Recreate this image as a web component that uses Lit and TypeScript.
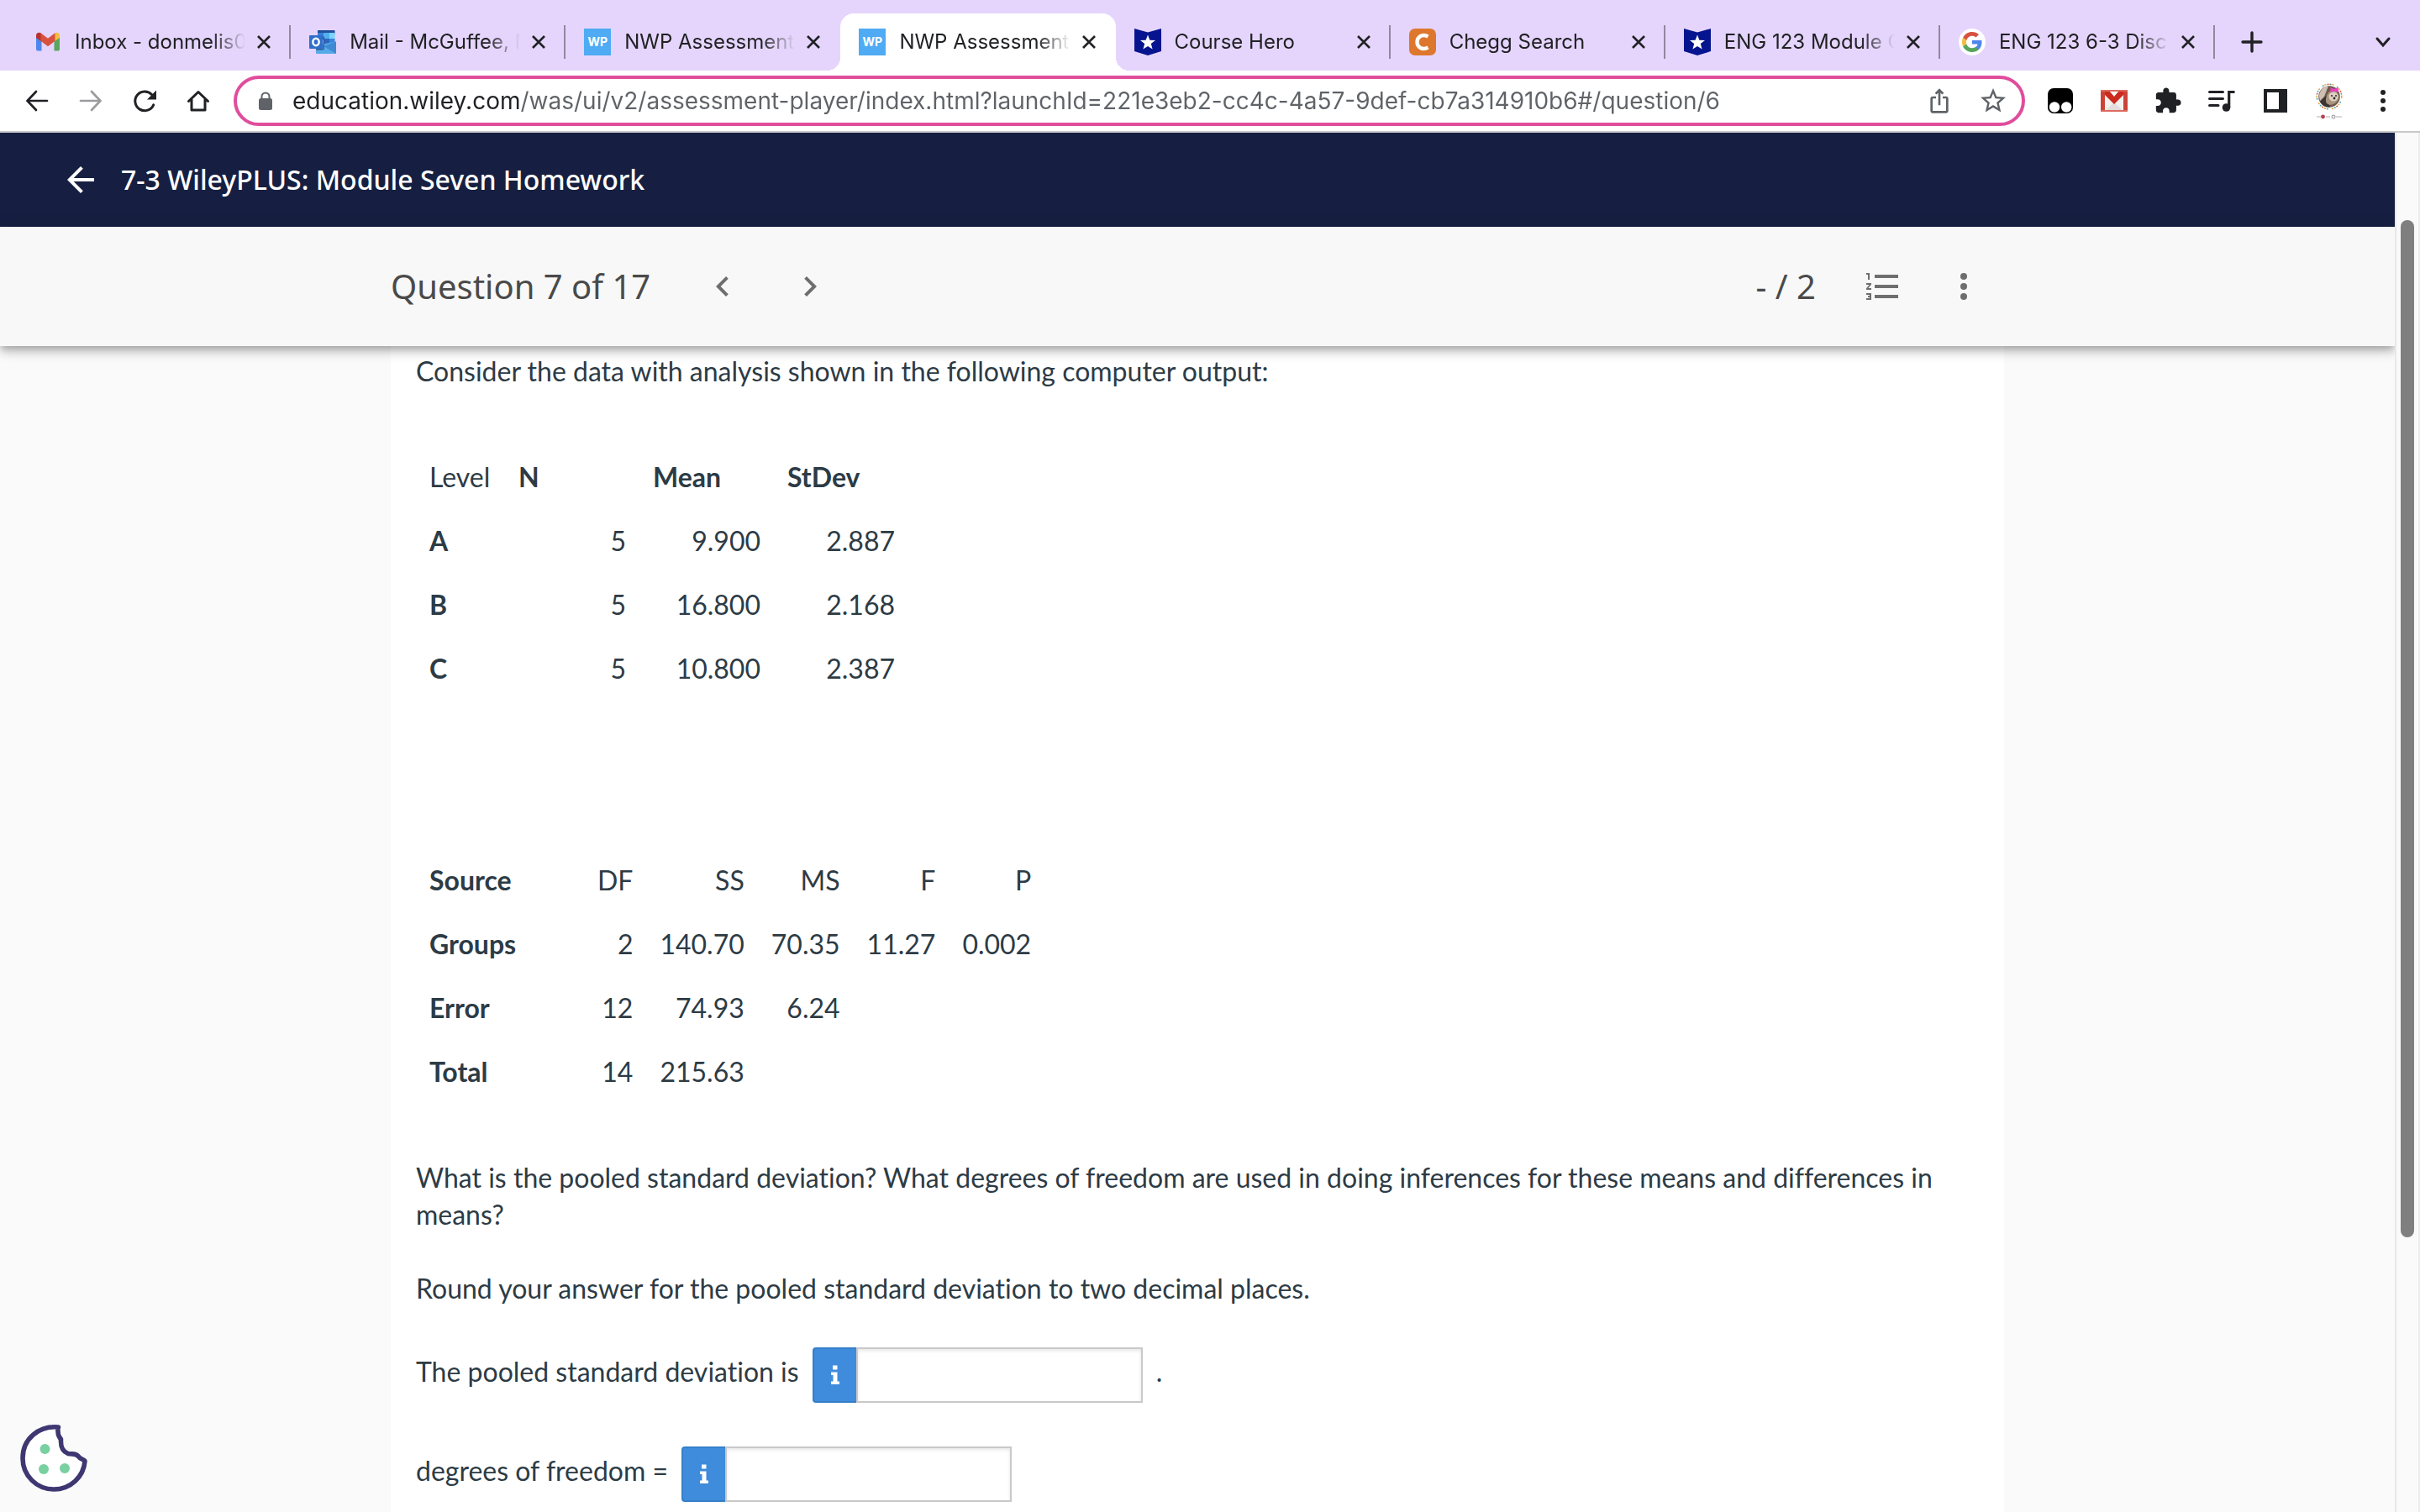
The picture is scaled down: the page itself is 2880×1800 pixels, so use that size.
import { LitElement, html, svg, css, nothing } from "lit";
import { customElement, property, state } from "lit/decorators.js";
import { classMap } from "lit/directives/class-map.js";

const icons = {
  gmail: svg`<svg viewBox="0 0 32 32" width="32" height="32">
    <path fill="#4f86ec" d="M2 10v14.500c0 1.300 .9 2.100 2.100 2.100H8.500V14z"/>
    <path fill="#58a55c" d="M23.500 14v12.600h4.400c1.200 0 2.100-.8 2.100-2.100V10z"/>
    <path fill="#b5332c" d="M2 11V8c0-3 3.300-4.300 5.600-2.600L8.500 6v9.500L2 11z"/>
    <path fill="#f2be42" d="M30 11V8c0-3-3.300-4.300-5.600-2.600L23.500 6v9.500L30 11z"/>
    <path fill="#d8513f" d="M7.500 5.300 16 11.700l8.500-6.400v9.400L16 21.300l-8.500-6.600z"/></svg>`,
  outlook: svg`<svg viewBox="0 0 32 32" width="32" height="32">
    <path fill="#1f4f9d" d="M11 2h18.500c.6 0 1 .4 1 1v4H10V3c0-.6.400-1 1-1z"/>
    <path fill="#3a7dd4" d="M10 5h7v8h-7z"/><path fill="#53aef0" d="M17 5h7v7h-7z"/><path fill="#7bd4fa" d="M24 5h6.500v7H24z"/>
    <path fill="#2f66bd" d="M17 12h7v8h-7z"/><path fill="#3a86dc" d="M24 12h6.500v6H24z"/>
    <path fill="#56aae8" d="M8 20l24-4.500V29a1 1 0 0 1-1 1H9a1 1 0 0 1-1-1z"/>
    <path fill="#3b82d0" d="M17 21 32 30V15.500z" opacity=".8"/>
    <path fill="#1b3f7c" d="M8 24h8.500V9l1.500 1v14l-1 1.500H8z" opacity=".7"/>
    <rect x="0" y="8" width="16" height="16" rx="1" fill="#2f6fca"/>
    <ellipse cx="8" cy="16" rx="3.700" ry="4.200" fill="none" stroke="#fff" stroke-width="2.400"/></svg>`,
  shield: svg`<svg viewBox="0 0 32 32" width="32" height="32">
    <path fill="#06148f" d="M0 0l16 4.500L32 0v27L16 32 0 27z"/>
    <path fill="#fff" d="M16 7.500l2.400 6.200 6.600.3-5.200 4.100 1.800 6.400-5.600-3.600-5.600 3.600 1.800-6.400L7 14l6.600-.3z"/></svg>`,
  chegg: svg`<svg viewBox="0 0 32 32" width="32" height="32">
    <rect width="32" height="32" rx="7" fill="#dd772e"/>
    <path d="M22.500 9.500C15 5.500 9.500 10.500 9.500 16s5.500 10.500 13 6.500" fill="none" stroke="#fff" stroke-width="4.400"/></svg>`,
  google: svg`<svg viewBox="0 0 32 32" width="32" height="32">
    <circle cx="16" cy="16" r="16" fill="#fff"/>
    <g transform="translate(4 4)">
    <path fill="#4f86ec" d="M23.500 12.300c0-.9-.1-1.600-.2-2.400H12v4.500h6.500c-.3 1.700-1.200 2.900-2.500 3.700v3h4c2.300-2.100 3.500-5.200 3.500-8.800z"/>
    <path fill="#58a55c" d="M12 24c3.200 0 6-1.100 8-2.900l-4-3c-1.100.7-2.400 1.200-4 1.200-3.100 0-5.800-2.100-6.700-4.900H1.200v3.100C3.200 21.400 7.300 24 12 24z"/>
    <path fill="#f2be42" d="M5.300 14.400c-.5-1.500-.5-3.200 0-4.700V6.600H1.200c-1.700 3.400-1.700 7.400 0 10.900z"/>
    <path fill="#d8513f" d="M12 4.700c1.700 0 3.300.6 4.500 1.800L20 3C17.800 1.100 15.100 0 12 0 7.300 0 3.200 2.700 1.200 6.600l4.100 3.100C6.200 6.800 8.900 4.700 12 4.700z"/></g></svg>`,
  close: svg`<svg viewBox="0 0 16 16" width="16" height="16"><path d="M1 1l14 14M15 1L1 15" stroke="#202124" stroke-width="2.600"/></svg>`,
  plus: svg`<svg viewBox="0 0 32 32" width="32" height="32"><path d="M16 5v22M5 16h22" stroke="#202124" stroke-width="3.400" stroke-linecap="round"/></svg>`,
  down: svg`<svg viewBox="0 0 32 32" width="32" height="32"><path d="M9 12l7 8 7-8" fill="none" stroke="#202124" stroke-width="3" stroke-linecap="round"/></svg>`,
  back: svg`<svg viewBox="0 0 32 32" width="32" height="32"><path d="M28 16H4.500M15 5L4.500 16 15 27" fill="none" stroke="#202124" stroke-width="2.700" stroke-linecap="round"/></svg>`,
  forward: svg`<svg viewBox="0 0 32 32" width="32" height="32"><path d="M4 16h23.500M17 5l10.500 11L17 27" fill="none" stroke="#9b9c9e" stroke-width="2.700" stroke-linecap="round"/></svg>`,
  reload: svg`<svg viewBox="0 0 32 32" width="32" height="32"><path d="M24.500 8.500A11.400 11.400 0 1 0 26.700 20.800" fill="none" stroke="#202124" stroke-width="3" stroke-linecap="round"/><path d="M30 3.500V14.500H19z" fill="#202124"/></svg>`,
  home: svg`<svg viewBox="0 0 32 32" width="32" height="32"><path d="M4.500 16.500L16 5.500l11.500 11M8 14.500V27h16V14.500" fill="none" stroke="#202124" stroke-width="3" stroke-linecap="round" stroke-linejoin="round"/></svg>`,
  lock: svg`<svg viewBox="0 0 24 24" width="24" height="24"><rect x="4" y="9" width="16" height="14" rx="2.500" fill="#5f6368"/><path d="M7.500 10V7a4.500 4.500 0 0 1 9 0v3" fill="none" stroke="#5f6368" stroke-width="2"/></svg>`,
  share: svg`<svg viewBox="0 0 24 24" width="32" height="32"><path fill="#5f6368" d="M16 5l-1.420 1.420-1.590-1.590V16h-1.980V4.830L9.420 6.420 8 5l4-4 4 4zm4 5v11c0 1.100-.9 2-2 2H6c-1.110 0-2-.9-2-2V10c0-1.110.89-2 2-2h3v2H6v11h12V10h-3V8h3c1.100 0 2 .89 2 2z"/></svg>`,
  star: svg`<svg viewBox="0 0 24 24" width="36" height="36"><path fill="#5f6368" d="M22 9.240l-7.190-.62L12 2 9.190 8.630 2 9.240l5.460 4.730L5.820 21 12 17.270 18.180 21l-1.630-7.030L22 9.240zM12 15.400l-3.760 2.270 1-4.280-3.320-2.880 4.380-.38L12 6.100l1.710 4.040 4.380.38-3.320 2.880 1 4.280L12 15.400z"/></svg>`,
  owl: svg`<svg viewBox="0 0 32 32" width="32" height="32"><rect x="1" y="1" width="30" height="30" rx="7"/><circle cx="9" cy="23.500" r="6.200" fill="#fff"/><circle cx="23.200" cy="23.500" r="6.200" fill="#fff"/></svg>`,
  mailChecker: svg`<svg viewBox="0 0 32 26" width="32" height="26"><rect width="32" height="26" fill="#f4f1ef"/><path d="M6 24l10-9 10 9z" fill="#e3dedb"/><path fill="#cc4238" d="M0 0h5v26H0zM27 0h5v26h-5z"/><path fill="#dd6a5f" d="M0 0h32v2H0zM0 24h32v2H0z"/><path fill="#cc2a1f" d="M5 2h6l5 6 5-6h6v4L16 17 5 6z"/><path fill="#fff" d="M11 2h10l-5 5z"/></svg>`,
  puzzle: svg`<svg viewBox="0 0 24 24" width="34" height="34"><path fill="#202124" d="M20.500 11H19V7c0-1.100-.9-2-2-2h-4V3.500C13 2.120 11.880 1 10.500 1S8 2.120 8 3.500V5H4c-1.100 0-1.990.9-1.990 2v3.800H3.500c1.490 0 2.700 1.210 2.700 2.700s-1.210 2.700-2.700 2.700H2V20c0 1.100.9 2 2 2h3.800v-1.500c0-1.490 1.210-2.700 2.700-2.700s2.700 1.210 2.700 2.700V22H17c1.100 0 2-.9 2-2v-4h1.500c1.380 0 2.500-1.120 2.500-2.500S21.880 11 20.500 11z"/></svg>`,
  music: svg`<svg viewBox="0 0 34 32" width="34" height="32"><path d="M2.500 5.500h16M2.500 13.500h16M2.500 21.500H13" stroke="#202124" stroke-width="3" stroke-linecap="round"/><circle cx="22.500" cy="24" r="4.800" fill="#202124"/><path d="M25.700 24V5.500h6.800" fill="none" stroke="#202124" stroke-width="3.200"/></svg>`,
  panel: svg`<svg viewBox="0 0 28 28" width="28" height="28"><path fill="#202124" fill-rule="evenodd" d="M0 0h28v28H0zM4 4v20h14V4z"/></svg>`,
  avatar: svg`<svg viewBox="0 0 32 44" width="32" height="44">
    <circle cx="16" cy="17" r="14.800" fill="none" stroke="#e8a23a" stroke-width="1.500" stroke-dasharray="2 7.100"/>
    <circle cx="16" cy="17" r="14.800" fill="none" stroke="#4aa3a0" stroke-width="1.500" stroke-dasharray="2 7.100" stroke-dashoffset="3"/>
    <circle cx="16" cy="17" r="14.800" fill="none" stroke="#d9583f" stroke-width="1.500" stroke-dasharray="2 16.200" stroke-dashoffset="6"/>
    <circle cx="16" cy="17" r="12.800" fill="#6d584b"/>
    <path d="M4 17A12.500 12.500 0 0 1 15 4.300L10 17 5 22z" fill="#cdbfb2"/>
    <path d="M5 23L12 16l5 13.700A12.500 12.500 0 0 1 5 23z" fill="#3a3434"/>
    <path d="M14 14c2-5 9-6 12-1 3 4 1 9-2 11-3 3-8 4-11 1-2-3-1-7 1-11z" fill="#a9947f"/>
    <ellipse cx="21" cy="17" rx="5.500" ry="5.500" fill="#ddd0c0"/>
    <circle cx="19" cy="16" r="1" fill="#2b2422"/><circle cx="24" cy="16" r="1" fill="#2b2422"/><circle cx="22" cy="19" r="1.400" fill="#2b2422"/>
    <path d="M17.500 6l4 2 5-2 .5 6-4.500-1.500-5 1.500z" fill="#ee3fc4"/>
    <path d="M1 41h5M12 41h5M24 41h7" stroke="#b0b0b0" stroke-width="1"/>
    <circle cx="8.500" cy="41" r="2.400" fill="#b9404f"/><circle cx="21" cy="41" r="2" fill="none" stroke="#8a8a8a"/></svg>`,
  dots: svg`<svg viewBox="0 0 32 32" width="32" height="32" fill="#202124"><circle cx="16" cy="6" r="3"/><circle cx="16" cy="16" r="3"/><circle cx="16" cy="26" r="3"/></svg>`,
  arrowBack: svg`<svg viewBox="0 0 24 24" width="48" height="48"><path fill="#fff" d="M20 11H7.830l5.590-5.590L12 4l-8 8 8 8 1.410-1.410L7.830 13H20z"/></svg>`,
  chevronLeft: svg`<svg viewBox="0 0 24 24" width="48" height="48"><path fill="#6e6e6e" d="M15.410 7.410L14 6l-6 6 6 6 1.410-1.410L10.830 12z"/></svg>`,
  chevronRight: svg`<svg viewBox="0 0 24 24" width="48" height="48"><path fill="#6e6e6e" d="M10 6L8.590 7.410 13.170 12l-4.580 4.590L10 18l6-6z"/></svg>`,
  list: svg`<svg viewBox="0 0 24 24" width="48" height="48"><path fill="#6e6e6e" d="M2 17h2v.5H3v1h1v.5H2v1h3v-4H2v1zm1-9h1V4H2v1h1v3zm-1 3h1.800L2 13.100v.9h3v-1H3.200L5 10.900V10H2v1zm5-6v2h14V5H7zm0 14h14v-2H7v2zm0-6h14v-2H7v2z"/></svg>`,
  more: svg`<svg viewBox="0 0 24 24" width="48" height="48" fill="#6e6e6e"><circle cx="12" cy="6" r="2"/><circle cx="12" cy="12" r="2"/><circle cx="12" cy="18" r="2"/></svg>`,
  info: svg`<svg viewBox="0 0 12 24" width="12" height="24"><path fill="#fff" d="M3 .5h5.500v5H3zM1 8.500h7.500v11H11V23H1v-3.500h2.500V12H1z"/></svg>`,
  cookie: svg`<svg viewBox="0 0 80 80" width="80" height="80">
    <path d="M45.500 3C22 1 3 17 3 40c0 21 17 37 37 37 20 0 35.500-15 37-33.500 0-2-5.500-2-8-6-3-4-7-2-12-3-7-3-9-8-8.500-17-3-5-3.500-4-3.500-9 0-3.500-.5-5.500-2-5.500z" fill="#fff" stroke="#3e3772" stroke-width="5.600" stroke-linejoin="round"/>
    <g fill="#79d0a1"><circle cx="29.500" cy="29" r="6"/><circle cx="28" cy="53" r="6"/><circle cx="53" cy="52" r="6"/></g></svg>`,
};

type Tab = { icon: unknown; title: string; active?: boolean; divider?: boolean };

const wp = html`<span class="wp">WP</span>`;

const TABS: Tab[] = [
  { icon: icons.gmail, title: "Inbox - donmelis0", divider: true },
  { icon: icons.outlook, title: "Mail - McGuffee, M", divider: true },
  { icon: wp, title: "NWP Assessment" },
  { icon: wp, title: "NWP Assessment", active: true },
  { icon: icons.shield, title: "Course Hero", divider: true },
  { icon: icons.chegg, title: "Chegg Search", divider: true },
  { icon: icons.shield, title: "ENG 123 Module C", divider: true },
  { icon: icons.google, title: "ENG 123 6-3 Disc", divider: true },
];

@customElement("browser-chrome")
class BrowserChrome extends LitElement {
  @state() url =
    "education.wiley.com/was/ui/v2/assessment-player/index.html?launchId=221e3eb2-cc4c-4a57-9def-cb7a314910b6#/question/6";

  static styles = css`
    :host { display: block; font-family: Inter, "Liberation Sans", sans-serif; color: #202124; }
    svg { display: block; }
    button { border: 0; background: none; padding: 0; margin: 0; font: inherit; color: inherit; display: flex; align-items: center; justify-content: center; cursor: pointer; }
    .strip { display: flex; align-items: flex-end; height: 84px; background: #e5d5fc; padding: 0 12px 0 19px; }
    .tabs { display: flex; flex: 1; min-width: 0; }
    .tab { flex: 1 1 0; min-width: 0; height: 68px; position: relative; display: flex; align-items: center; padding-left: 22px; box-sizing: border-box; }
    .tab.active { background: #fff; border-radius: 16px 16px 0 0; }
    .tab.active::before, .tab.active::after { content: ""; position: absolute; bottom: 0; width: 16px; height: 16px; }
    .tab.active::before { left: -16px; background: radial-gradient(circle at 0 0, transparent 16px, #fff 16px); }
    .tab.active::after { right: -16px; background: radial-gradient(circle at 100% 0, transparent 16px, #fff 16px); }
    .favicon { flex: none; width: 32px; }
    .wp { display: block; width: 32px; height: 32px; line-height: 32px; background: #4fabf3; color: #fff; font-size: 14px; font-weight: 700; text-align: center; }
    .title { flex: 1; min-width: 0; margin: 0 14px 0 16px; font-size: 24px; line-height: 32px; white-space: nowrap; overflow: hidden; -webkit-mask-image: linear-gradient(90deg, #000 calc(100% - 40px), transparent); mask-image: linear-gradient(90deg, #000 calc(100% - 40px), transparent); }
    .close { flex: none; width: 16px; height: 32px; margin-right: 22px; }
    .divider { flex: none; width: 2px; height: 40px; background: transparent; }
    .divider.on { background: #95859f; }
    .add { width: 88px; height: 68px; }
    .spread { margin-left: 80px; width: 64px; height: 68px; }
    .toolbar { display: flex; align-items: center; height: 72px; padding: 0 12px; background: #fff; border-bottom: 2px solid #c9c9cb; }
    .tool { flex: none; width: 64px; height: 64px; }
    .omnibox { flex: 1; min-width: 0; display: flex; align-items: center; height: 60px; box-sizing: border-box; margin: 0 10px; border: 4px solid #e04d9c; border-radius: 30px; padding: 0 2px 0 22px; }
    .lock { width: 24px; }
    .url { flex: 1; min-width: 0; margin: 0 16px 0 20px; height: 48px; padding: 0; border: 0; outline: 0; font-family: inherit; font-size: 28px; background: linear-gradient(90deg, #202124 272px, #5f6368 272px); -webkit-background-clip: text; background-clip: text; color: transparent; caret-color: #202124; }
    .omnibox .tool { height: 48px; }
  `;

  private tab(t: Tab) {
    return html`<div class=${classMap({ tab: true, active: !!t.active })} role="tab" aria-selected=${t.active ? "true" : "false"}>
      <span class="favicon">${t.icon}</span>
      <span class="title">${t.title}</span>
      <button class="close" aria-label="Close tab">${icons.close}</button>
      <span class=${classMap({ divider: true, on: !!t.divider })}></span>
    </div>`;
  }

  private tool(icon: unknown, label: string) {
    return html`<button class="tool" aria-label=${label}>${icon}</button>`;
  }

  render() {
    return html`
      <div class="strip">
        <div class="tabs" role="tablist">${TABS.map((t) => this.tab(t))}</div>
        <button class="add" aria-label="New tab">${icons.plus}</button>
        <button class="spread" aria-label="Search tabs">${icons.down}</button>
      </div>
      <div class="toolbar">
        ${this.tool(icons.back, "Back")} ${this.tool(icons.forward, "Forward")}
        ${this.tool(icons.reload, "Reload")} ${this.tool(icons.home, "Home")}
        <div class="omnibox">
          <span class="lock">${icons.lock}</span>
          <input class="url" type="text" aria-label="Address" spellcheck="false" .value=${this.url} />
          ${this.tool(icons.share, "Share")} ${this.tool(icons.star, "Bookmark")}
        </div>
        ${this.tool(icons.owl, "Script manager")} ${this.tool(icons.mailChecker, "Mail checker")}
        ${this.tool(icons.puzzle, "Extensions")} ${this.tool(icons.music, "Media")}
        ${this.tool(icons.panel, "Side panel")} ${this.tool(icons.avatar, "Profile")}
        ${this.tool(icons.dots, "Menu")}
      </div>
    `;
  }
}

@customElement("answer-field")
class AnswerField extends LitElement {
  @property() label = "";
  @property() suffix = "";

  static styles = css`
    :host { display: flex; align-items: flex-start; gap: 16px; }
    label, .suffix { line-height: 58px; }
    .group { display: flex; height: 66px; }
    .info { width: 52px; box-sizing: border-box; margin: 0; padding: 0; border: 2px solid #357fc9; border-right: 0; border-radius: 4px 0 0 4px; background: #3f8bdc; display: flex; align-items: center; justify-content: center; cursor: pointer; }
    svg { display: block; }
    input { width: 341px; box-sizing: border-box; margin: 0; padding: 0 16px; border: 2px solid #c9c9c9; border-radius: 0; background: #fff; box-shadow: inset 0 2px 4px rgba(0, 0, 0, 0.1); font: inherit; color: inherit; outline: 0; }
  `;

  render() {
    return html`
      <label for="answer">${this.label}</label>
      <div class="group">
        <button class="info" aria-label="Format information">${icons.info}</button>
        <input id="answer" type="text" />
      </div>
      ${this.suffix ? html`<span class="suffix">${this.suffix}</span>` : nothing}
    `;
  }
}

const LEVELS = [
  ["A", "5", "9.900", "2.887"],
  ["B", "5", "16.800", "2.168"],
  ["C", "5", "10.800", "2.387"],
];

const ANOVA = [
  ["Groups", "2", "140.70", "70.35", "11.27", "0.002"],
  ["Error", "12", "74.93", "6.24", "", ""],
  ["Total", "14", "215.63", "", "", ""],
];

@customElement("app-root")
class AppRoot extends LitElement {
  static styles = css`
    :host { display: flex; flex-direction: column; min-height: 100vh; position: relative; background: #fafafa; }
    svg { display: block; }
    button, .home { border: 0; background: none; padding: 0; margin: 0; display: block; cursor: pointer; }
    .view { flex: 1; display: flex; }
    .page { flex: 1; min-width: 0; display: flex; flex-direction: column; overflow: hidden; }
    .masthead { display: flex; align-items: center; gap: 24px; height: 112px; padding: 0 72px; background: #161f41; color: #fff; font-family: "Noto Sans", "Open Sans", sans-serif; }
    h1 { margin: 0; font-size: 32px; line-height: 44px; font-weight: 500; }
    .bar { position: relative; z-index: 1; background: #f8f8f8; box-shadow: 0 4px 8px -2px rgba(0, 0, 0, 0.2), 0 8px 10px rgba(0, 0, 0, 0.14), 0 2px 20px rgba(0, 0, 0, 0.12); }
    .bar-inner { max-width: 1920px; margin: 0 auto; height: 142px; display: flex; align-items: center; box-sizing: border-box; padding-right: 24px; font-family: "Noto Sans", "Open Sans", sans-serif; color: #4a4a4a; }
    h2 { margin: 0; font-size: 40px; line-height: 56px; font-weight: 400; }
    .pager { display: flex; gap: 56px; margin-left: 62px; }
    .score { margin-left: auto; font-size: 40px; line-height: 56px; }
    .tools { display: flex; gap: 48px; margin-left: 56px; }
    .sheet { flex: 1; width: 100%; max-width: 1920px; margin: 0 auto; box-sizing: border-box; padding: 8px 30px 12px; background: #fff; font-family: Lato, "Liberation Sans", sans-serif; font-size: 32px; line-height: 44px; font-variant-ligatures: none; color: #2d3b45; }
    p { margin: 0 0 44px; }
    .lead { margin: 0; }
    table { border-collapse: collapse; margin: 66px 0; }
    .anova { margin-top: 176px; }
    th, td { padding: 16px; text-align: right; font-weight: 400; }
    th:first-child, .levels thead th { text-align: left; }
    tbody th, .strong { font-weight: 700; }
    .levels .wide { width: 128px; }
    .levels th:first-child { width: 74px; }
    .anova .first { width: 168px; }
    .field { margin-top: 52px; }
    .field.top { margin-top: 48px; }
    .last { margin: 0; }
    .scroll { flex: none; width: 30px; box-sizing: border-box; border-left: 2px solid #e8e8e8; border-right: 2px solid #ececec; background: #fafafa; display: grid; grid-template-rows: 104fr 1211fr 327fr; justify-items: center; }
    .thumb { grid-row: 2; width: 16px; border-radius: 8px; background: #7f7f7f; }
    .cookie { position: absolute; left: 24px; bottom: 24px; }
  `;

  render() {
    return html`
      <browser-chrome></browser-chrome>
      <div class="view">
        <div class="page">
          <header class="masthead">
            <a class="home" href="#" aria-label="Back to course">${icons.arrowBack}</a>
            <h1>7-3 WileyPLUS: Module Seven Homework</h1>
          </header>
          <div class="bar">
            <div class="bar-inner">
              <h2>Question 7 of 17</h2>
              <nav class="pager">
                <button aria-label="Previous question">${icons.chevronLeft}</button>
                <button aria-label="Next question">${icons.chevronRight}</button>
              </nav>
              <span class="score">- / 2</span>
              <div class="tools">
                <button aria-label="Question list">${icons.list}</button>
                <button aria-label="More options">${icons.more}</button>
              </div>
            </div>
          </div>
          <main class="sheet">
            <p class="lead">Consider the data with analysis shown in the following computer output:</p>
            <table class="levels">
              <thead>
                <tr><th>Level</th>${["N", "Mean", "StDev"].map((h) => html`<th class="wide strong">${h}</th>`)}</tr>
              </thead>
              <tbody>
                ${LEVELS.map(([name, ...values]) => html`<tr><th>${name}</th>${values.map((v) => html`<td>${v}</td>`)}</tr>`)}
              </tbody>
            </table>
            <table class="anova">
              <thead>
                <tr><th class="first strong">Source</th>${["DF", "SS", "MS", "F", "P"].map((h) => html`<th>${h}</th>`)}</tr>
              </thead>
              <tbody>
                ${ANOVA.map(([name, ...values]) => html`<tr><th>${name}</th>${values.map((v) => html`<td>${v}</td>`)}</tr>`)}
              </tbody>
            </table>
            <p>
              What is the pooled standard deviation? What degrees of freedom are used in doing inferences for these means
              and differences in means?
            </p>
            <p class="last">Round your answer for the pooled standard deviation to two decimal places.</p>
            <answer-field class="field top" label="The pooled standard deviation is" suffix="."></answer-field>
            <answer-field class="field" label="degrees of freedom ="></answer-field>
          </main>
        </div>
        <div class="scroll"><div class="thumb"></div></div>
      </div>
      <button class="cookie" aria-label="Cookie preferences">${icons.cookie}</button>
    `;
  }
}
